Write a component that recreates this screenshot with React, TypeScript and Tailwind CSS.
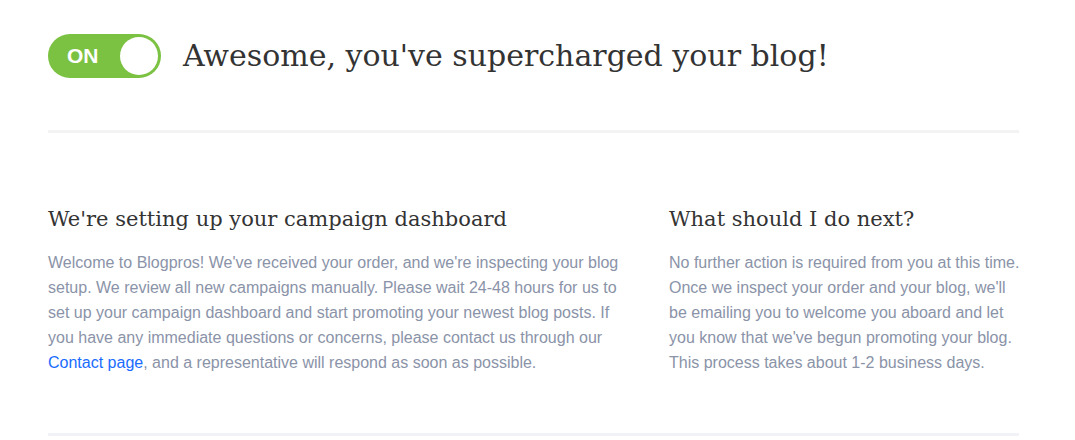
export default function App() {
  return (
    <div className="min-h-[440px] bg-white pl-12 pr-[54px] font-['Liberation_Sans',Arial,sans-serif]">
      <div className="flex items-center gap-[22px] pt-[33px] pb-[52px]">
        <div className="flex h-[44px] w-[113px] items-center justify-between rounded-full bg-[#7cc242] pl-[19px] pr-[3px]">
          <span className="text-[21px] font-bold text-white">ON</span>
          <span className="h-[38px] w-[38px] rounded-full bg-white"></span>
        </div>
        <h1 className="font-['DejaVu_Serif',serif] text-[30px] text-[#333]">
          Awesome, you've supercharged your blog!
        </h1>
      </div>
      <div className="mr-[2px] h-[3px] bg-[#f3f3f3]"></div>
      <div className="flex pt-[71px] pb-[58px]">
        <div className="w-[580px] shrink-0">
          <h2 className="font-['DejaVu_Serif',serif] text-[21px] text-[#333]">
            We're setting up your campaign dashboard
          </h2>
          <p className="mt-[14px] text-[16px] leading-[25px] text-[#8a93a8]">
            Welcome to Blogpros! We've received your order, and we're inspecting your blog
            setup. We review all new campaigns manually. Please wait 24-48 hours for us to
            set up your campaign dashboard and start promoting your newest blog posts. If
            you have any immediate questions or concerns, please contact us through our{" "}
            <a className="text-[#1a6cff]" href="#">
              Contact page
            </a>
            , and a representative will respond as soon as possible.
          </p>
        </div>
        <div className="ml-[41px] w-[352px]">
          <h2 className="font-['DejaVu_Serif',serif] text-[21px] text-[#333]">
            What should I do next?
          </h2>
          <p className="mt-[14px] text-[16px] leading-[25px] text-[#8a93a8]">
            No further action is required from you at this time. Once we inspect your order
            and your blog, we'll be emailing you to welcome you aboard and let you know that
            we've begun promoting your blog. This process takes about 1-2 business days.
          </p>
        </div>
      </div>
      <div className="mr-[2px] h-[3px] bg-[#f0f2f5]"></div>
    </div>
  );
}
